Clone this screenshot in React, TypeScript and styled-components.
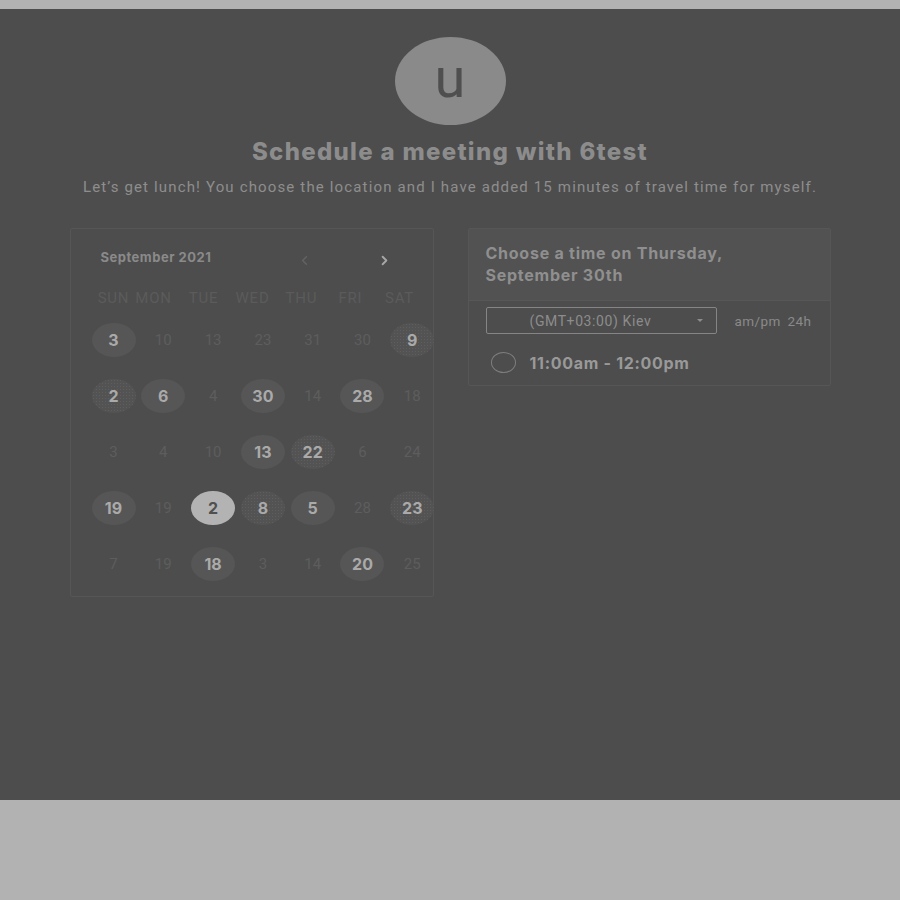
import React from "react";
import styled, { createGlobalStyle, css } from "styled-components";
import { ChevronLeft, ChevronRight } from "lucide-react";

const GlobalStyle = createGlobalStyle`
  html, body {
    margin: 0;
    padding: 0;
    background: #b2b2b2;
  }
  body {
    padding-top: 9px;
    font-family: Roboto, "Liberation Sans", sans-serif;
  }
`;

const Page = styled.main`
  height: 791px;
  background: #4d4d4d;
  box-sizing: border-box;
  padding-top: 28px;
  display: flex;
  flex-direction: column;
  align-items: center;
`;

const Avatar = styled.div`
  width: 111px;
  height: 88px;
  border-radius: 50%;
  background: #8a8a8a;
  color: #4f4f4f;
  display: flex;
  align-items: center;
  justify-content: center;
  font-family: Roboto, sans-serif;
  font-size: 56px;
  line-height: 1;
  padding-bottom: 6px;
  box-sizing: border-box;
`;

const Title = styled.h1`
  margin: 13px 0 0;
  font-family: Inter, "Liberation Sans", sans-serif;
  font-weight: 800;
  font-size: 24px;
  letter-spacing: 1.3px;
  line-height: 28px;
  color: #8c8c8c;
`;

const Subtitle = styled.p`
  margin: 12px 0 0;
  font-size: 15px;
  letter-spacing: 1.15px;
  line-height: 18px;
  color: #8e8e8e;
  white-space: nowrap;
`;

const Columns = styled.div`
  margin-top: 32px;
  display: flex;
  align-items: flex-start;
  gap: 34px;
`;

const CalendarCard = styled.section`
  width: 364px;
  height: 369px;
  box-sizing: border-box;
  border: 1px solid #565656;
  border-radius: 2px;
  padding: 20px 0 0 21px;
`;

const CalHeader = styled.div`
  height: 22px;
  display: flex;
  align-items: center;
`;

const Month = styled.span`
  flex: 0 0 196px;
  margin: -6px 0 0 9px;
  font-family: Inter, sans-serif;
  font-weight: 700;
  font-size: 13px;
  letter-spacing: 0.5px;
  color: #8a8a8a;
`;

const NavButton = styled.span<{ $active?: boolean }>`
  display: flex;
  flex: 0 0 ${(p) => (p.$active ? "auto" : "80px")};
  color: ${(p) => (p.$active ? "#a6a6a6" : "#626262")};
`;

const WeekRow = styled.div`
  margin: 16px 0 0 2px;
  height: 22px;
  display: grid;
  grid-template-columns: 40px 40px 60px 38px 60px 38px 60px;
  align-items: center;
`;

const WeekDay = styled.span`
  text-align: center;
  font-size: 15px;
  color: #5b5b5b;
  letter-spacing: 0.8px;
`;

const DayGrid = styled.div`
  margin-top: 3px;
  display: grid;
  grid-template-columns: repeat(7, 44px);
  grid-auto-rows: 56px;
  column-gap: 5.8px;
`;

type DayKind = "dim" | "open" | "busy" | "selected";

const Day = styled.span<{ $kind: DayKind }>`
  align-self: center;
  height: 34px;
  border-radius: 50%;
  display: flex;
  align-items: center;
  justify-content: center;
  font-size: 15px;
  ${(p) =>
    p.$kind === "dim" &&
    css`
      color: #5d5d5d;
      font-size: 15px;
    `}
  ${(p) =>
    (p.$kind === "open" || p.$kind === "busy") &&
    css`
      background: #565656;
      color: #aaaaaa;
      font-family: Inter, sans-serif;
      font-weight: 700;
      font-size: 16px;
    `}
  ${(p) =>
    p.$kind === "busy" &&
    css`
      background: radial-gradient(circle, #5e5e5e 0.6px, transparent 1px) 0 0 / 3px 3px,
        #535353;
    `}
  ${(p) =>
    p.$kind === "selected" &&
    css`
      background: #b3b3b3;
      color: #505050;
      font-family: Inter, sans-serif;
      font-weight: 700;
      font-size: 16px;
    `}
`;

const TimePanel = styled.section`
  width: 363px;
  height: 158px;
  box-sizing: border-box;
  border: 1px solid #565656;
  border-radius: 2px;
`;

const TimeHeader = styled.header`
  height: 72px;
  box-sizing: border-box;
  padding: 13px 17px 0;
  background: #525252;
  border-bottom: 1px solid #575757;
  font-family: Inter, sans-serif;
  font-weight: 700;
  font-size: 16px;
  line-height: 22px;
  letter-spacing: 0.75px;
  color: #8f8f8f;
`;

const Controls = styled.div`
  display: flex;
  align-items: center;
  padding: 6px 17px 0;
  gap: 18px;
`;

const ZoneSelect = styled.div`
  width: 231px;
  height: 27px;
  box-sizing: border-box;
  border: 1px solid #858585;
  border-radius: 2px;
  display: flex;
  align-items: center;
  padding: 0 13px 0 43px;
  font-size: 14px;
  letter-spacing: 0.6px;
  color: #8c8c8c;
  justify-content: space-between;
`;

const Caret = styled.span`
  width: 0;
  height: 0;
  border-left: 3.5px solid transparent;
  border-right: 3.5px solid transparent;
  border-top: 3.5px solid #8c8c8c;
`;

const Format = styled.span`
  font-size: 13.5px;
  letter-spacing: 0.4px;
  color: #8a8a8a;
  word-spacing: 3px;
  white-space: pre;
`;

const Slot = styled.div`
  display: flex;
  align-items: center;
  padding: 18px 0 0 22px;
  gap: 14px;
`;

const Radio = styled.span`
  width: 25px;
  height: 21px;
  box-sizing: border-box;
  border: 1.5px solid #7e7e7e;
  border-radius: 50%;
`;

const SlotTime = styled.span`
  font-family: Inter, sans-serif;
  font-weight: 700;
  font-size: 16px;
  letter-spacing: 0.7px;
  color: #999999;
`;

const weekDays = ["SUN", "MON", "TUE", "WED", "THU", "FRI", "SAT"];

const days: [string, DayKind][] = [
  ["3", "open"], ["10", "dim"], ["13", "dim"], ["23", "dim"], ["31", "dim"], ["30", "dim"], ["9", "busy"],
  ["2", "busy"], ["6", "open"], ["4", "dim"], ["30", "open"], ["14", "dim"], ["28", "open"], ["18", "dim"],
  ["3", "dim"], ["4", "dim"], ["10", "dim"], ["13", "open"], ["22", "busy"], ["6", "dim"], ["24", "dim"],
  ["19", "open"], ["19", "dim"], ["2", "selected"], ["8", "busy"], ["5", "open"], ["28", "dim"], ["23", "busy"],
  ["7", "dim"], ["19", "dim"], ["18", "open"], ["3", "dim"], ["14", "dim"], ["20", "open"], ["25", "dim"],
];

export default function App() {
  return (
    <>
      <GlobalStyle />
      <Page>
        <Avatar>u</Avatar>
        <Title>Schedule a meeting with 6test</Title>
        <Subtitle>
          Let’s get lunch! You choose the location and I have added 15 minutes of travel time for myself.
        </Subtitle>
        <Columns>
          <CalendarCard>
            <CalHeader>
              <Month>September 2021</Month>
              <NavButton>
                <ChevronLeft size={15} strokeWidth={2.5} />
              </NavButton>
              <NavButton $active>
                <ChevronRight size={15} strokeWidth={3} />
              </NavButton>
            </CalHeader>
            <WeekRow>
              {weekDays.map((d) => (
                <WeekDay key={d}>{d}</WeekDay>
              ))}
            </WeekRow>
            <DayGrid>
              {days.map(([n, kind], i) => (
                <Day key={i} $kind={kind}>
                  {n}
                </Day>
              ))}
            </DayGrid>
          </CalendarCard>
          <TimePanel>
            <TimeHeader>
              Choose a time on Thursday,
              <br />
              September 30th
            </TimeHeader>
            <Controls>
              <ZoneSelect>
                (GMT+03:00) Kiev
                <Caret />
              </ZoneSelect>
              <Format>am/pm 24h</Format>
            </Controls>
            <Slot>
              <Radio />
              <SlotTime>11:00am - 12:00pm</SlotTime>
            </Slot>
          </TimePanel>
        </Columns>
      </Page>
    </>
  );
}
